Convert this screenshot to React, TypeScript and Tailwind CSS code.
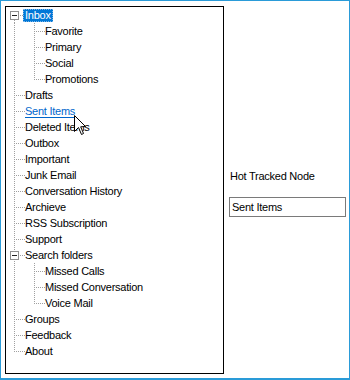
import React from 'react';

type Cell = 'pipe' | 'tee' | 'elbow' | 'boxFirst' | 'boxTee';

type Row = {
  label: string;
  cells: Cell[];
  selected?: boolean;
  hot?: boolean;
};

// tree rows, each 16px tall
const rows: Row[] = [
  { label: 'Inbox', cells: ['boxFirst'], selected: true },
  { label: 'Favorite', cells: ['pipe', 'tee'] },
  { label: 'Primary', cells: ['pipe', 'tee'] },
  { label: 'Social', cells: ['pipe', 'tee'] },
  { label: 'Promotions', cells: ['pipe', 'elbow'] },
  { label: 'Drafts', cells: ['tee'] },
  { label: 'Sent Items', cells: ['tee'], hot: true },
  { label: 'Deleted Items', cells: ['tee'] },
  { label: 'Outbox', cells: ['tee'] },
  { label: 'Important', cells: ['tee'] },
  { label: 'Junk Email', cells: ['tee'] },
  { label: 'Conversation History', cells: ['tee'] },
  { label: 'Archieve', cells: ['tee'] },
  { label: 'RSS Subscription', cells: ['tee'] },
  { label: 'Support', cells: ['tee'] },
  { label: 'Search folders', cells: ['boxTee'] },
  { label: 'Missed Calls', cells: ['pipe', 'tee'] },
  { label: 'Missed Conversation', cells: ['pipe', 'tee'] },
  { label: 'Voice Mail', cells: ['pipe', 'elbow'] },
  { label: 'Groups', cells: ['tee'] },
  { label: 'Feedback', cells: ['tee'] },
  { label: 'About', cells: ['elbow'] },
];

const dot = { stroke: '#a0a0a0', strokeWidth: 1, strokeDasharray: '1 1' };

// connector lines drawn per 20x16 cell
function LineCell({ kind }: { kind: Cell }) {
  const box = kind === 'boxFirst' || kind === 'boxTee';
  return (
    <svg width="20" height="16" viewBox="0 0 20 16" className="shrink-0" shapeRendering="crispEdges">
      {(kind === 'pipe' || kind === 'tee' || kind === 'boxTee') && (
        <line x1="7.5" y1="0" x2="7.5" y2="16" {...dot} />
      )}
      {kind === 'elbow' && <line x1="7.5" y1="0" x2="7.5" y2="9" {...dot} />}
      {kind === 'boxFirst' && <line x1="7.5" y1="9" x2="7.5" y2="16" {...dot} />}
      {(kind === 'tee' || kind === 'elbow') && <line x1="9" y1="8.5" x2="18" y2="8.5" {...dot} />}
      {box && (
        <>
          <line x1="13" y1="8.5" x2="18" y2="8.5" {...dot} />
          <rect x="3.5" y="4.5" width="8" height="8" fill="white" stroke="#919191" />
          <line x1="5" y1="8.5" x2="10" y2="8.5" stroke="#222" />
        </>
      )}
    </svg>
  );
}

function Cursor() {
  return (
    <svg className="absolute left-[73px] top-[114px]" width="14" height="21" viewBox="0 0 14 21">
      <path
        d="M0.5 0.5 L0.5 16.5 L4.5 12.5 L7.5 19.5 L9.5 18.5 L6.7 11.8 L11.5 11.5 Z"
        fill="white"
        stroke="black"
        strokeWidth="1"
      />
    </svg>
  );
}

export default function App() {
  return (
    <div
      className="relative w-[350px] h-[380px] bg-white border border-[#2a9bd8] border-b-2 overflow-hidden"
      style={{ fontFamily: '"Liberation Sans", Arial, sans-serif' }}
    >
      <div className="flex items-start pl-[4px] pt-[5px]">
        {/* tree view */}
        <div className="w-[219px] h-[368px] border border-black pl-[1px]">
          {rows.map((r) => (
            <div key={r.label} className="flex h-[16px] items-center">
              {r.cells.map((c, i) => (
                <LineCell key={i} kind={c} />
              ))}
              <span
                className={
                  r.selected
                    ? 'ml-[-4px] px-[2px] h-[13px] leading-[13px] text-[11px] tracking-[-0.25px] bg-[#0078d7] text-white outline-1 outline-dotted outline-[#7fb5e6] -outline-offset-1'
                    : r.hot
                    ? 'ml-[-2px] text-[11px] tracking-[-0.25px] leading-[16px] text-[#0066cc] underline underline-offset-[2px]'
                    : 'ml-[-2px] text-[11px] tracking-[-0.25px] leading-[16px] text-black'
                }
              >
                {r.label}
              </span>
            </div>
          ))}
        </div>

        {/* hot tracked panel */}
        <div className="flex flex-col pl-[5px] pt-[164px]">
          <div className="text-[11px] tracking-[-0.25px] leading-[13px] text-black pl-[1px]">Hot Tracked Node</div>
          <div className="mt-[14px] w-[117px] h-[20px] border border-[#7a7a7a] flex items-center px-[2px] text-[11px] tracking-[-0.25px] text-black">
            Sent Items
          </div>
        </div>
      </div>
      <Cursor />
    </div>
  );
}
